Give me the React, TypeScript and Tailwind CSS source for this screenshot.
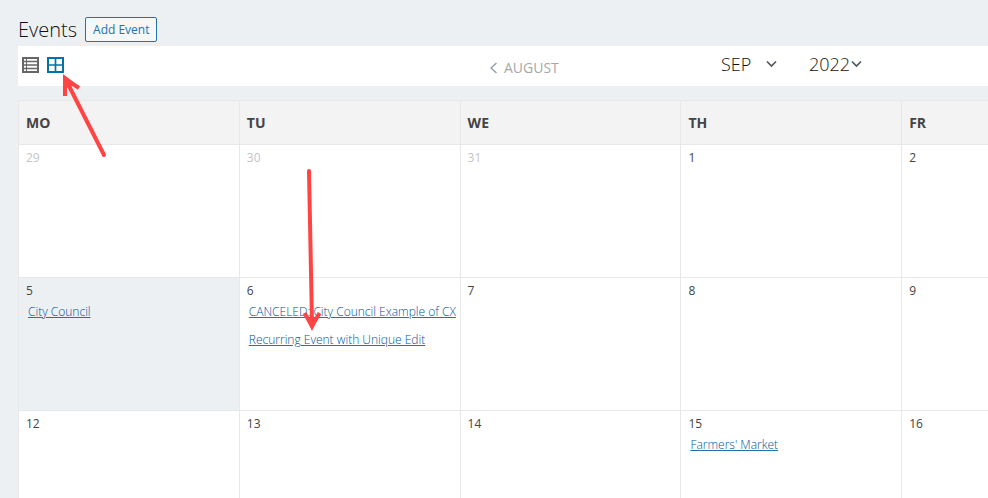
type Day = { day: number; muted?: boolean; today?: boolean; events?: string[] };

const weekdays = ["MO", "TU", "WE", "TH", "FR"];

const weeks: Day[][] = [
  [{ day: 29, muted: true }, { day: 30, muted: true }, { day: 31, muted: true }, { day: 1 }, { day: 2 }],
  [
    { day: 5, today: true, events: ["City Council"] },
    { day: 6, events: ["CANCELED: City Council Example of CX", "Recurring Event with Unique Edit"] },
    { day: 7 },
    { day: 8 },
    { day: 9 },
  ],
  [{ day: 12 }, { day: 13 }, { day: 14 }, { day: 15, events: ["Farmers' Market"] }, { day: 16 }],
];

function Chevron() {
  return (
    <svg className="pointer-events-none absolute right-0" width="11" height="8" viewBox="0 0 11 8" fill="none" stroke="#50575e" strokeWidth="1.700">
      <path d="M1 1.500L5.500 6L10 1.500" />
    </svg>
  );
}

function Toolbar() {
  return (
    <div className="flex h-10 items-center bg-white pl-1">
      {/* View switch */}
      <div className="flex flex-1 gap-2 pb-0.5">
        <button type="button" aria-label="List view" className="text-[#666]">
          <svg width="17" height="16" viewBox="0 0 17 16" fill="none" stroke="currentColor">
            <path d="M1 1h15v14H1z" strokeWidth="2" />
            <path d="M1 4.500h15M1 8h15M1 11.500h15" strokeWidth="1.500" />
            <path d="M4.500 1v14" />
          </svg>
        </button>
        <button type="button" aria-label="Calendar view" className="text-[#0073aa]">
          <svg width="17" height="16" viewBox="0 0 17 16" fill="none" stroke="currentColor">
            <path d="M1 1h15v14H1z" strokeWidth="2" />
            <path d="M8.500 1v14M1 8h15" strokeWidth="1.700" />
          </svg>
        </button>
      </div>

      {/* Month navigation */}
      <div className="flex w-[499px] items-center pb-1">
        <button type="button" className="mt-2 flex w-[232px] items-center gap-1.5 text-sm text-[#a7a7a7]">
          <svg width="9" height="12" viewBox="0 0 9 12" fill="none" stroke="#8c9aa8">
            <path d="M7.500 1L2 6l5.500 5" strokeWidth="1.300" />
          </svg>
          AUGUST
        </button>
        <div className="relative mr-8 flex w-14 items-center">
          <select aria-label="Month" className="h-8 w-full appearance-none bg-transparent text-lg font-light text-[#111]">
            <option>SEP</option>
          </select>
          <Chevron />
        </div>
        <div className="relative flex w-[53px] items-center">
          <select aria-label="Year" className="h-8 w-full appearance-none bg-transparent text-lg font-light text-[#111]">
            <option>2022</option>
          </select>
          <Chevron />
        </div>
      </div>
    </div>
  );
}

function DayCell({ day, muted, today, events = [] }: Day) {
  return (
    <td className={`border border-[#e8e8e8] px-[7px] pt-[3px] align-top ${today ? "bg-[#ecf0f3]" : "bg-white"}`}>
      <div className={`text-xs leading-5 ${muted ? "text-[#c3c4c7]" : "text-[#444]"}`}>{day}</div>
      <ul className="px-0.5 pt-[3px]">
        {events.map((event) => (
          <li key={event} className="mb-3 text-xs font-light whitespace-nowrap">
            <a href="#" className="text-[#0054a0] underline decoration-[#2271b1]">{event}</a>
          </li>
        ))}
      </ul>
    </td>
  );
}

export default function App() {
  return (
    <div className="relative h-screen overflow-hidden bg-[#ecf0f3] pt-[17px] pl-[18px] font-['Open_Sans','Noto_Sans',sans-serif]">
      <header className="mb-1 flex h-[25px] items-center gap-2">
        <h1 className="text-xl font-light text-[#111]">Events</h1>
        <button type="button" className="h-[25px] rounded-xs border border-[#2271b1] bg-[#f6f7f7] px-[7px] pt-px text-xs text-[#2271b1]">
          Add Event
        </button>
      </header>

      <Toolbar />

      <table className="mt-3.5 w-[1105px] min-w-[113%] table-fixed border-collapse">
        <thead>
          <tr className="h-11">
            {weekdays.map((name) => (
              <th key={name} className="border border-[#e8e8e8] bg-[#f3f3f3] px-[7px] text-left text-sm font-bold text-[#444]">
                {name}
              </th>
            ))}
          </tr>
        </thead>
        <tbody>
          {weeks.map((week) => (
            <tr key={week[0].day} className="h-[133px]">
              {week.map((cell) => (
                <DayCell key={cell.day} {...cell} />
              ))}
            </tr>
          ))}
        </tbody>
      </table>

      {/* Callout arrows */}
      <svg
        className="pointer-events-none absolute top-0 left-0"
        width="340"
        height="350"
        fill="none"
        stroke="#ff4444"
        strokeWidth="4"
        strokeLinecap="round"
      >
        <path d="M104 155L67 82" />
        <path d="M65 96V79L79 88" strokeLinecap="butt" />
        <path d="M63 74L76 84L67 88L63 88Z" fill="#ff4444" stroke="none" />
        <path d="M309 171L312 323" />
        <path d="M304.500 313L312 326L319.500 313" strokeLinecap="butt" />
        <path d="M306 318L312 331L318 318Z" fill="#ff4444" stroke="none" />
      </svg>
    </div>
  );
}
